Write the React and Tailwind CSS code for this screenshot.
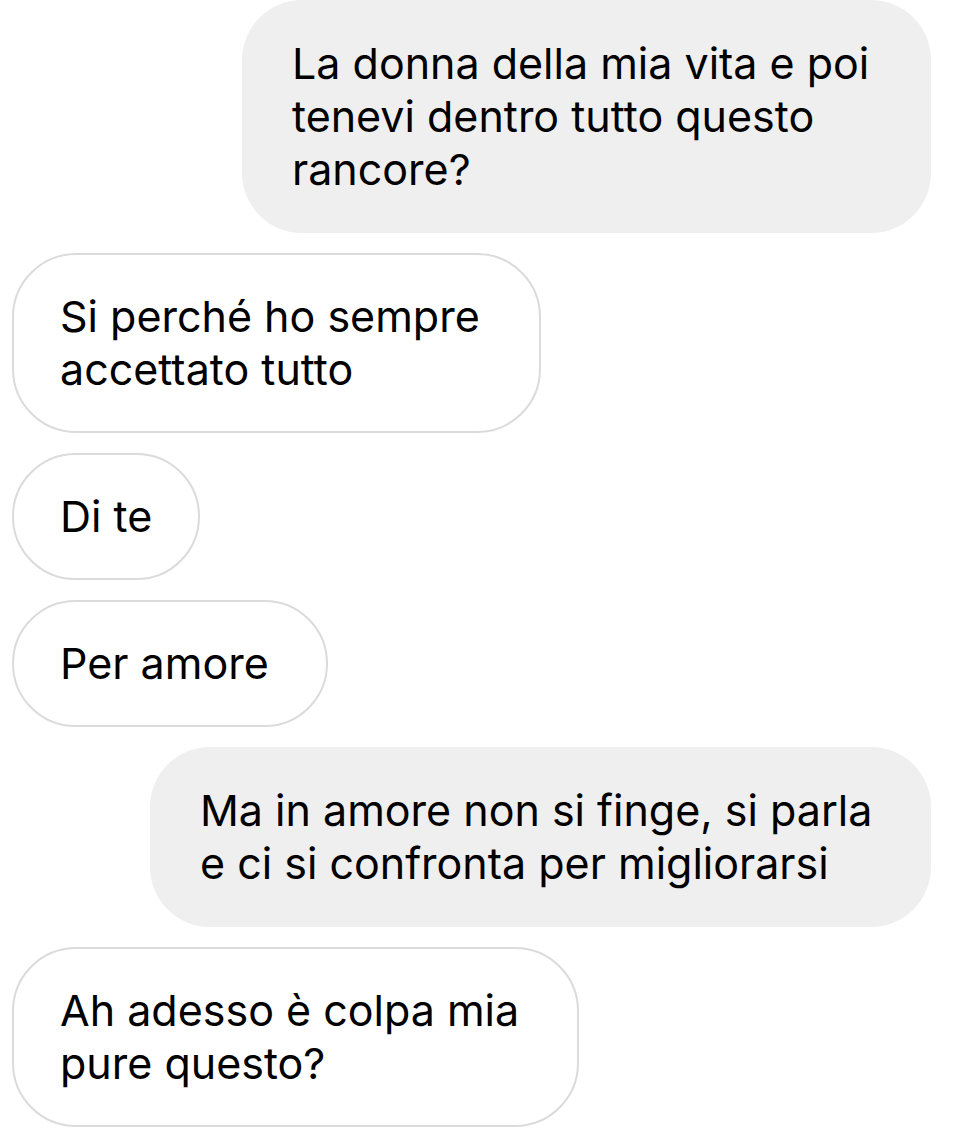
import React from 'react';

const Bubble = ({ mine, className = '', children }) => (
  <div
    className={
      (mine
        ? 'self-end bg-[#efefef] rounded-[60px] pl-[50px] py-[37px] '
        : 'self-start bg-white border-2 border-[#dbdbdb] rounded-[64px] pl-[46px] py-[35px] ') +
      'whitespace-nowrap ' +
      className
    }
  >
    {children}
  </div>
);

const App = () => {
  return (
    <main className="w-[968px] h-[1138px] bg-white overflow-hidden flex flex-col gap-5 pl-3 pr-[37px] text-black text-[43px] leading-[53px] font-['Inter','Liberation_Sans',sans-serif]">
      <Bubble mine className="w-[689px]">
        La donna della mia vita e poi
        <br />
        tenevi dentro tutto questo
        <br />
        rancore?
      </Bubble>

      <Bubble className="w-[529px]">
        Si perché ho sempre
        <br />
        accettato tutto
      </Bubble>

      <Bubble className="w-[188px]">Di te</Bubble>

      <Bubble className="w-[316px]">Per amore</Bubble>

      <Bubble mine className="w-[781px]">
        Ma in amore non si finge, si parla
        <br />
        e ci si confronta per migliorarsi
      </Bubble>

      <Bubble className="w-[567px]">
        Ah adesso è colpa mia
        <br />
        pure questo?
      </Bubble>
    </main>
  );
};

export default App;
